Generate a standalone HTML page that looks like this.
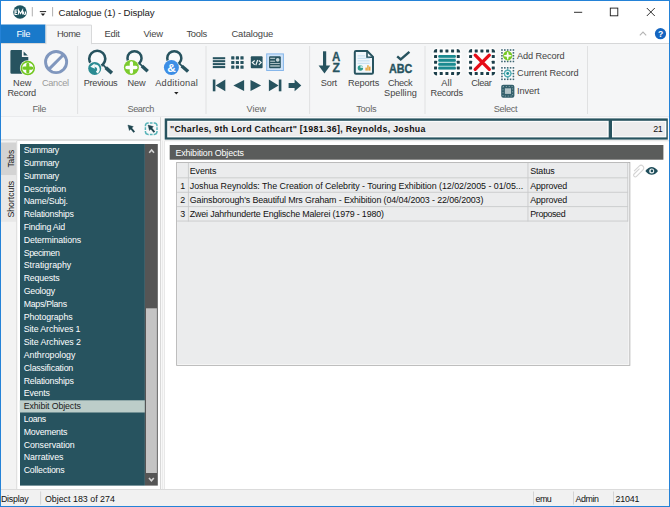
<!DOCTYPE html>
<html><head><meta charset="utf-8"><title>Catalogue (1) - Display</title>
<style>
html,body{margin:0;padding:0;}
body{width:670px;height:507px;overflow:hidden;position:relative;background:#ffffff;font-family:"Liberation Sans",sans-serif;}
.b{position:absolute;box-sizing:border-box;}
.t{position:absolute;white-space:nowrap;line-height:12.0px;height:12.0px;}
svg.ov{position:absolute;left:0;top:0;}
.vt{position:absolute;white-space:nowrap;line-height:12px;font-size:8.6px;color:#222;transform-origin:0 0;transform:rotate(-90deg);}
</style></head><body>

<svg class="ov" width="670" height="507" viewBox="0 0 670 507" font-family="Liberation Sans, sans-serif">
<!-- ===== tab row / ribbon ===== -->
<rect x="1" y="43" width="668" height="74" fill="#f5f6f7"/>
<rect x="1" y="43" width="668" height="1" fill="#d6d7d8"/>
<rect x="1" y="116.3" width="668" height="0.9" fill="#e6e7e8"/>
<rect x="1" y="24.5" width="44.5" height="18.5" fill="#1979ca"/>
<path d="M46 44.2 V25.1 H91.5 V44.2" fill="#f5f6f7" stroke="#d8d9da" stroke-width="1"/>
<!-- group separators -->
<g stroke="#e0e1e2" stroke-width="1">
<line x1="77.6" y1="46" x2="77.6" y2="114"/><line x1="206" y1="46" x2="206" y2="114"/><line x1="309.6" y1="46" x2="309.6" y2="114"/>
<line x1="425" y1="46" x2="425" y2="114"/><line x1="587.5" y1="46" x2="587.5" y2="114"/>
</g>
<!-- ===== title bar ===== -->
<circle cx="20" cy="12" r="6.8" fill="#1f5560"/>
<path d="M17.5 9.9 H15 V14.4 H17.5 M15 12.1 H17 M18.5 14.6 V10 L20.55 13.6 L22.6 10 V14.6 M23.7 11.4 V13.6 a.9 .9 0 0 0 1.8 0 V11.4 M25.5 11.4 V14.6" fill="none" stroke="#fff" stroke-width="1.05" stroke-linejoin="miter"/>
<g stroke="#a6a6a6" stroke-width="0.9"><line x1="32.3" y1="7.1" x2="32.3" y2="16.4"/><line x1="52.6" y1="7.1" x2="52.6" y2="16.4"/></g>
<rect x="39.8" y="11.1" width="6.3" height="1" fill="#222"/>
<path d="M40.7 13.6 H45.2 L42.95 15.9z" fill="#222"/>
<g stroke="#1a1a1a" stroke-width="0.9" fill="none">
<line x1="574" y1="12.3" x2="582.2" y2="12.3"/>
<rect x="610.3" y="8.1" width="7.5" height="7.7"/>
<path d="M646.8 8 L654.8 16 M654.8 8 L646.8 16"/>
</g>
<polyline points="639.8,35.3 643,32.1 646.2,35.3" fill="none" stroke="#b4b4b4" stroke-width="1.1"/>
<circle cx="660.5" cy="33.7" r="5.6" fill="#1565c0"/>
<text x="660.5" y="36.8" font-weight="700" font-size="8.6" fill="#fff" text-anchor="middle">?</text>

<!-- ===== File group ===== -->
<path d="M11.6 50.1 H21.9 V57 H28.3 V72.6 a1.2 1.2 0 0 1 -1.2 1.2 H11.6 a1.2 1.2 0 0 1 -1.2 -1.2 V51.3 a1.2 1.2 0 0 1 1.2 -1.2z" fill="#27535f"/>
<path d="M23.6 51.4 L27.8 55.6 H23.6z" fill="#27535f"/>
<circle cx="27.8" cy="68.1" r="7.9" fill="#f7f8f9"/>
<circle cx="27.8" cy="68.1" r="6.45" fill="#fdfefd" stroke="#73c823" stroke-width="1.6"/>
<path d="M23.9 68.1 H31.7 M27.8 64.2 V72" stroke="#73c823" stroke-width="3.1" stroke-linecap="round" fill="none"/>
<circle cx="56.1" cy="62.1" r="10.55" fill="#f8f9fa" stroke="#8097be" stroke-width="2.9"/>
<line x1="48.8" y1="69.4" x2="63.4" y2="54.8" stroke="#8097be" stroke-width="3"/>

<!-- ===== Search group ===== -->
<g fill="#f9fafb" stroke="#27535f">
<circle cx="97.25" cy="58.85" r="8.05" stroke-width="2.6"/>
<circle cx="134.5" cy="58.2" r="7.05" stroke-width="2.5"/>
<circle cx="174.3" cy="58.2" r="7.05" stroke-width="2.5"/>
</g>
<g stroke="#27535f" fill="none">
<line x1="103.3" y1="65" x2="106.4" y2="68.3" stroke-width="1.8"/><line x1="105.7" y1="67.6" x2="111.9" y2="73.2" stroke-width="3.6"/>
<line x1="139.8" y1="63.6" x2="142.5" y2="66.5" stroke-width="1.8"/><line x1="141.9" y1="65.9" x2="147.7" y2="71.3" stroke-width="3.4"/>
<line x1="179.6" y1="63.6" x2="182.3" y2="66.5" stroke-width="1.8"/><line x1="181.7" y1="65.9" x2="188.1" y2="71.6" stroke-width="3.4"/>
</g>
<circle cx="94.7" cy="68.4" r="7.3" fill="#f7f8f9"/>
<circle cx="94.7" cy="68.4" r="6.5" fill="#2a8b92"/>
<path d="M96.6 72.5 A3.6 3.6 0 0 0 94.3 65.8" fill="none" stroke="#f4fafa" stroke-width="2.5"/>
<path d="M90.3 66.7 L94.5 63.4 L94.9 68.7z" fill="#f4fafa"/>
<circle cx="131.4" cy="67.5" r="8.1" fill="#f7f8f9"/>
<circle cx="131.4" cy="67.5" r="7.5" fill="#7ccb2d"/>
<path d="M126.9 67.5 H135.9 M131.4 63 V72" stroke="#fdfefc" stroke-width="3.3" stroke-linecap="round" fill="none"/>
<circle cx="171.4" cy="67.5" r="8.1" fill="#f7f8f9"/>
<circle cx="171.4" cy="67.5" r="7.5" fill="#3d8ee6"/>
<text x="171.6" y="71.7" font-weight="700" font-size="11.8" fill="#fff" text-anchor="middle">&amp;</text>
<path d="M174.1 91.9 H178.5 L176.3 94.5z" fill="#222"/>

<!-- ===== View group ===== -->
<g fill="#27535f">
<rect x="212.8" y="57.2" width="12.4" height="2.05"/><rect x="212.8" y="60.15" width="12.4" height="2.05"/><rect x="212.8" y="63.1" width="12.4" height="2.05"/><rect x="212.8" y="66.05" width="12.4" height="2.05"/>
<g>
<rect x="231.2" y="56.3" width="3.2" height="3.2" rx=".5"/><rect x="235.8" y="56.3" width="3.2" height="3.2" rx=".5"/><rect x="240.4" y="56.3" width="3.2" height="3.2" rx=".5"/>
<rect x="231.2" y="60.9" width="3.2" height="3.2" rx=".5"/><rect x="235.8" y="60.9" width="3.2" height="3.2" rx=".5"/><rect x="240.4" y="60.9" width="3.2" height="3.2" rx=".5"/>
<rect x="231.2" y="65.5" width="3.2" height="3.2" rx=".5"/><rect x="235.8" y="65.5" width="3.2" height="3.2" rx=".5"/><rect x="240.4" y="65.5" width="3.2" height="3.2" rx=".5"/>
</g>
<rect x="250.8" y="56.3" width="11.8" height="11.9" rx=".9"/>
</g>
<g fill="none" stroke="#f2f6f6" stroke-width="1.15"><polyline points="254.7,60.5 252.3,62.6 254.7,64.7"/><line x1="257.7" y1="60" x2="255.8" y2="65.2"/><polyline points="258.8,60.5 261.2,62.6 258.8,64.7"/></g>
<rect x="266.7" y="53.9" width="16.7" height="16.6" fill="#cfe3f8" stroke="#86b6ea" stroke-width="1"/>
<rect x="269.1" y="56.3" width="11.7" height="11.9" rx=".9" fill="#27535f"/>
<g fill="#c9d7da">
<rect x="270.2" y="57.8" width="4.9" height="1"/><rect x="270.2" y="60.7" width="4.9" height="1"/>
<circle cx="277.7" cy="59.9" r="1.8"/>
<rect x="270.2" y="63" width="9.6" height=".8"/>
</g>
<rect x="270.2" y="65" width="9.6" height="1.9" fill="#8fa8ad"/>
<g fill="#27535f">
<rect x="212.8" y="79.5" width="2.6" height="11.8"/><path d="M225.3 79.5 V91.3 L215.6 85.4z"/>
<path d="M244.1 80 V91 L233.4 85.5z"/>
<path d="M250.5 80 V91 L261.1 85.5z"/>
<path d="M268.9 79.5 V91.3 L278.6 85.4z"/><rect x="278.8" y="79.5" width="2.6" height="11.8"/>
<path d="M288.6 83 H294.6 V79.6 L301.3 85.45 L294.6 91.3 V87.9 H288.6z"/>
</g>

<!-- ===== Tools group ===== -->
<g fill="#27535f">
<rect x="323" y="51.3" width="3.2" height="14.8"/><path d="M318.6 65.5 H330.3 L324.45 73.4z"/>
</g>
<text x="332" y="60.5" font-weight="700" font-size="13.5" fill="#27535f" stroke="#27535f" stroke-width=".3" textLength="8.3" lengthAdjust="spacingAndGlyphs">A</text>
<text x="332.6" y="71.9" font-weight="700" font-size="13.5" fill="#27535f" stroke="#27535f" stroke-width=".3" textLength="7.4" lengthAdjust="spacingAndGlyphs">Z</text>
<path d="M356 51.1 H367.2 L373 56.9 V72.6 a1.2 1.2 0 0 1 -1.2 1.2 H356 a1.2 1.2 0 0 1 -1.2 -1.2 V52.3 a1.2 1.2 0 0 1 1.2 -1.2z" fill="#f2f7fc" stroke="#27535f" stroke-width="2"/>
<path d="M367 51.4 V57.2 H372.8" fill="none" stroke="#27535f" stroke-width="1.6"/>
<g fill="#c4def0"><rect x="357.6" y="55.3" width="7.6" height="1.1"/><rect x="357.6" y="57.8" width="12" height="1.1"/><rect x="357.6" y="60.3" width="12" height="1.1"/><rect x="357.6" y="62.8" width="12" height="1.1"/></g>
<circle cx="360.4" cy="68" r="2.7" fill="#2f9c8f"/>
<path d="M360.4 68 V65.3 A2.7 2.7 0 0 1 363.1 68z" fill="#bfe3dd"/>
<g fill="#e9a63c"><rect x="365.4" y="67.6" width="1.5" height="3"/><rect x="367.2" y="65.2" width="1.5" height="5.4"/><rect x="369" y="66.6" width="1.5" height="4"/></g>
<polyline points="397.2,56.4 400.7,59.5 409.4,51.8" fill="none" stroke="#27535f" stroke-width="2.4"/>
<text x="388.9" y="73.4" font-weight="700" font-size="12" fill="#27535f" stroke="#27535f" stroke-width=".35" textLength="23.4" lengthAdjust="spacingAndGlyphs">ABC</text>

<!-- ===== Select group ===== -->
<g fill="#1c3f4a">
<rect x="432.35" y="47.70" width="29.12" height="29.12" rx="4.5" fill="#fdfdfd"/>
<path d="M437.05 52.40 L433.65 52.40 A3.4 3.4 0 0 1 437.05 49.00z"/>
<rect x="434.05" y="55.08" width="3" height="3" rx=".4"/>
<rect x="434.05" y="60.76" width="3" height="3" rx=".4"/>
<rect x="434.05" y="66.44" width="3" height="3" rx=".4"/>
<path d="M437.05 72.12 L433.65 72.12 A3.4 3.4 0 0 0 437.05 75.52z"/>
<rect x="439.73" y="49.40" width="3" height="3" rx=".4"/>
<rect x="439.73" y="72.12" width="3" height="3" rx=".4"/>
<rect x="445.41" y="49.40" width="3" height="3" rx=".4"/>
<rect x="445.41" y="72.12" width="3" height="3" rx=".4"/>
<rect x="451.09" y="49.40" width="3" height="3" rx=".4"/>
<rect x="451.09" y="72.12" width="3" height="3" rx=".4"/>
<path d="M456.77 52.40 L460.17 52.40 A3.4 3.4 0 0 0 456.77 49.00z"/>
<rect x="456.77" y="55.08" width="3" height="3" rx=".4"/>
<rect x="456.77" y="60.76" width="3" height="3" rx=".4"/>
<rect x="456.77" y="66.44" width="3" height="3" rx=".4"/>
<path d="M456.77 72.12 L460.17 72.12 A3.4 3.4 0 0 1 456.77 75.52z"/>
</g>
<g fill="#b4dadb"><rect x="438.6" y="55.2" width="17" height="14.2" rx="1"/></g>
<g fill="#1a8a90"><rect x="438.2" y="55" width="17.7" height="2.8" rx="1.2"/><rect x="438.2" y="58.95" width="17.7" height="2.8" rx="1.2"/><rect x="438.2" y="62.9" width="17.7" height="2.8" rx="1.2"/><rect x="438.2" y="66.8" width="17.7" height="2.8" rx="1.2"/></g>
<g fill="#1c3f4a">
<rect x="467.35" y="47.70" width="29.12" height="29.12" rx="4.5" fill="#fdfdfd"/>
<path d="M472.05 52.40 L468.65 52.40 A3.4 3.4 0 0 1 472.05 49.00z"/>
<rect x="469.05" y="55.08" width="3" height="3" rx=".4"/>
<rect x="469.05" y="60.76" width="3" height="3" rx=".4"/>
<rect x="469.05" y="66.44" width="3" height="3" rx=".4"/>
<path d="M472.05 72.12 L468.65 72.12 A3.4 3.4 0 0 0 472.05 75.52z"/>
<rect x="474.73" y="49.40" width="3" height="3" rx=".4"/>
<rect x="474.73" y="72.12" width="3" height="3" rx=".4"/>
<rect x="480.41" y="49.40" width="3" height="3" rx=".4"/>
<rect x="480.41" y="72.12" width="3" height="3" rx=".4"/>
<rect x="486.09" y="49.40" width="3" height="3" rx=".4"/>
<rect x="486.09" y="72.12" width="3" height="3" rx=".4"/>
<path d="M491.77 52.40 L495.17 52.40 A3.4 3.4 0 0 0 491.77 49.00z"/>
<rect x="491.77" y="55.08" width="3" height="3" rx=".4"/>
<rect x="491.77" y="60.76" width="3" height="3" rx=".4"/>
<rect x="491.77" y="66.44" width="3" height="3" rx=".4"/>
<path d="M491.77 72.12 L495.17 72.12 A3.4 3.4 0 0 1 491.77 75.52z"/>
</g>
<path d="M475.2 55.2 L489.3 69.3 M489.3 55.2 L475.2 69.3" stroke="#e60c17" stroke-width="3.3" stroke-linecap="round"/>
<!-- Add record -->
<rect x="500.35" y="48.40" width="14.68" height="14.68" fill="#fcfcfd"/>
<g fill="#3c6572">
<rect x="501.15" y="49.20" width="1.6" height="1.6"/>
<rect x="501.15" y="52.07" width="1.6" height="1.6"/>
<rect x="501.15" y="54.94" width="1.6" height="1.6"/>
<rect x="501.15" y="57.81" width="1.6" height="1.6"/>
<rect x="501.15" y="60.68" width="1.6" height="1.6"/>
<rect x="504.02" y="49.20" width="1.6" height="1.6"/>
<rect x="504.02" y="60.68" width="1.6" height="1.6"/>
<rect x="506.89" y="49.20" width="1.6" height="1.6"/>
<rect x="506.89" y="60.68" width="1.6" height="1.6"/>
<rect x="509.76" y="49.20" width="1.6" height="1.6"/>
<rect x="509.76" y="60.68" width="1.6" height="1.6"/>
<rect x="512.63" y="49.20" width="1.6" height="1.6"/>
<rect x="512.63" y="52.07" width="1.6" height="1.6"/>
<rect x="512.63" y="54.94" width="1.6" height="1.6"/>
<rect x="512.63" y="57.81" width="1.6" height="1.6"/>
<rect x="512.63" y="60.68" width="1.6" height="1.6"/>
</g>
<circle cx="507.7" cy="55.75" r="4.65" fill="#77c826"/>
<path d="M508.7 54.75 L511.5 55.3 L511.5 56.2 L508.7 56.75 L508.15 59.55 L507.25 59.55 L506.7 56.75 L503.9 56.2 L503.9 55.3 L506.7 54.75 L507.25 51.95 L508.15 51.95z" fill="#fbfdf9"/>
<!-- Current record -->
<rect x="500.35" y="66.25" width="14.68" height="14.68" fill="#fcfcfd"/>
<g fill="#3c6572">
<rect x="501.15" y="67.05" width="1.6" height="1.6"/>
<rect x="501.15" y="69.92" width="1.6" height="1.6"/>
<rect x="501.15" y="72.79" width="1.6" height="1.6"/>
<rect x="501.15" y="75.66" width="1.6" height="1.6"/>
<rect x="501.15" y="78.53" width="1.6" height="1.6"/>
<rect x="504.02" y="67.05" width="1.6" height="1.6"/>
<rect x="504.02" y="78.53" width="1.6" height="1.6"/>
<rect x="506.89" y="67.05" width="1.6" height="1.6"/>
<rect x="506.89" y="78.53" width="1.6" height="1.6"/>
<rect x="509.76" y="67.05" width="1.6" height="1.6"/>
<rect x="509.76" y="78.53" width="1.6" height="1.6"/>
<rect x="512.63" y="67.05" width="1.6" height="1.6"/>
<rect x="512.63" y="69.92" width="1.6" height="1.6"/>
<rect x="512.63" y="72.79" width="1.6" height="1.6"/>
<rect x="512.63" y="75.66" width="1.6" height="1.6"/>
<rect x="512.63" y="78.53" width="1.6" height="1.6"/>
</g>
<circle cx="507.7" cy="73.5" r="3.25" fill="#f4fafa" stroke="#55adb3" stroke-width="1.3"/>
<circle cx="507.7" cy="73.5" r="1.45" fill="#1f8f96"/>
<path d="M507.7 68.6 v1.4 M507.7 77 v1.4 M502.8 73.5 h1.4 M511.2 73.5 h1.4" stroke="#55adb3" stroke-width="1.2"/>
<!-- Invert -->
<rect x="500.6" y="84.2" width="14.4" height="14.2" rx="2.6" fill="#fbfbfc"/>
<rect x="501.2" y="84.8" width="13.2" height="13" rx="2" fill="#34606c"/>
<rect x="503" y="86.55" width="9.6" height="9.5" fill="none" stroke="#8eabb0" stroke-width="1" stroke-dasharray="1 1.87"/>
<rect x="504.9" y="88.3" width="6.1" height="5.6" fill="#b3c4c7"/>

<!-- ===== left pane ===== -->
<rect x="1" y="117.2" width="160" height="23" fill="#f7f8f9"/>
<rect x="1" y="139.6" width="160.4" height="0.9" fill="#bdbdbd"/>
<rect x="1" y="140.5" width="15.8" height="348.5" fill="#f3f3f3"/>
<rect x="1" y="142.5" width="15.3" height="32.9" fill="#d3d3d3"/>
<rect x="1" y="175.4" width="15.3" height="46.4" fill="#e8e8e8"/>
<rect x="16.4" y="141" width="0.8" height="348" fill="#d4d4d4"/>
<rect x="160.2" y="117.2" width="0.9" height="372" fill="#cfcfcf"/>
<rect x="161.1" y="117.2" width="3.1" height="372" fill="#f8f8f8"/>
<rect x="162" y="140.5" width="0.7" height="348.5" fill="#e6e6e6"/>
<rect x="164.2" y="140.5" width="0.7" height="348.5" fill="#dedede"/>
<rect x="20" y="144" width="124.9" height="341.6" fill="#27535f"/>
<rect x="19.8" y="400.3" width="125.1" height="12.2" fill="#bccdc9"/>
<rect x="144.9" y="144" width="12.9" height="341.6" fill="#555555"/>
<rect x="146" y="308.3" width="10.9" height="164.7" fill="#c4c4c4"/>
<polyline points="149.2,152.7 151.6,150 154,152.7" fill="none" stroke="#d4d4d4" stroke-width="1.6"/>
<polyline points="149,478 151.4,480.8 153.8,478" fill="none" stroke="#d4d4d4" stroke-width="1.6"/>
<text transform="translate(14.3 167.6) rotate(-90)" font-size="8.8" fill="#161616" textLength="17.8" lengthAdjust="spacingAndGlyphs">Tabs</text>
<text transform="translate(14.3 217.5) rotate(-90)" font-size="8.8" fill="#161616" textLength="36.7" lengthAdjust="spacingAndGlyphs">Shortcuts</text>
<!-- pane toolbar icons -->
<g fill="#1f4650" stroke="#1f4650">
<path d="M127.9 125.1 L133.3 126.6 L129.4 130.5z" stroke-width=".4"/><line x1="130.9" y1="128.1" x2="134.3" y2="132.1" stroke-width="1.9"/>
<path d="M148.0 125.1 L153.4 126.6 L149.5 130.5z" stroke-width=".4"/><line x1="151.0" y1="128.1" x2="154.4" y2="132.1" stroke-width="1.9"/>
</g>
<path d="M145.4 126.2 V125.7 A2.8 2.8 0 0 1 148.20000000000002 122.9 H148.70000000000002 M153.7 122.9 H154.2 A2.8 2.8 0 0 1 157.0 125.7 V126.2 M157.0 131.1 V131.6 A2.8 2.8 0 0 1 154.2 134.4 H153.7 M148.70000000000002 134.4 H148.20000000000002 A2.8 2.8 0 0 1 145.4 131.6 V131.1 M149.85 122.9 H152.54999999999998 M149.85 134.4 H152.54999999999998 M145.4 127.30000000000001 V130.0 M157.0 127.30000000000001 V130.0" fill="none" stroke="#58b4b9" stroke-width="1.45"/>

<!-- ===== right pane ===== -->
<rect x="165" y="140" width="504" height="1.3" fill="#e9e9e9"/>
<rect x="164.7" y="118.4" width="503.1" height="21.2" fill="#27535f"/>
<rect x="167.2" y="120.8" width="441.5" height="16.6" fill="#fbfbfb"/>
<rect x="168.5" y="122.1" width="438.6" height="14" fill="#ececed"/>
<rect x="612" y="120.8" width="54.4" height="16.6" fill="#fbfbfb"/>
<rect x="613.3" y="122.1" width="51.7" height="14" fill="#ececed"/>
<rect x="169.7" y="145" width="493.7" height="14.7" fill="#5a5c5b"/>
<!-- grid -->
<rect x="176.2" y="162" width="454.1" height="203.8" fill="#aeaeae"/>
<rect x="177.1" y="162.9" width="452.3" height="202" fill="#ffffff"/>
<rect x="177.1" y="162.9" width="451.5" height="201.2" fill="#ebeced"/>
<g fill="#c9cacb">
<rect x="177.1" y="177.4" width="451" height="0.9"/><rect x="177.1" y="191.8" width="451" height="0.9"/><rect x="177.1" y="206.2" width="451" height="0.9"/><rect x="177.1" y="220.6" width="451" height="0.9"/>
<rect x="187.9" y="162.9" width="0.9" height="58.6"/><rect x="527.5" y="162.9" width="0.9" height="58.6"/><rect x="627.3" y="162.9" width="0.9" height="58.6"/>
</g>
<!-- paperclip & eye -->
<g transform="translate(637.9 171.2) rotate(45) scale(.9)" fill="none" stroke="#d4d4d4" stroke-width="1.2">
<path d="M-3 3 V-5 a3 3 0 0 1 6 0 V5.2 a1.9 1.9 0 0 1 -3.8 0 V-3.4"/>
</g>
<path d="M645.4 170.9 Q651.7 163.2 658 170.9 Q651.7 178.6 645.4 170.9z" fill="#1f4e5b"/>
<circle cx="651.7" cy="170.9" r="2.5" fill="#f2f6f7"/>
<circle cx="651.9" cy="170.9" r="1.3" fill="#1f4e5b"/>

<!-- ===== status bar ===== -->
<rect x="1" y="489" width="668" height="17" fill="#f1f1f1"/>
<rect x="1" y="489" width="668" height="0.9" fill="#d9d9d9"/>
<g fill="#d0d0d0"><rect x="40.2" y="491.5" width=".9" height="13"/><rect x="533" y="491.5" width=".9" height="13"/><rect x="573.1" y="491.5" width=".9" height="13"/><rect x="613" y="491.5" width=".9" height="13"/></g>
</svg>

<span class="t" style="left:58.60px;top:7.04px;font-size:9.7px;color:#1a1a1a;letter-spacing:-0.143px;">Catalogue (1) - Display</span>
<span class="t" style="left:16.50px;top:28.44px;font-size:9.4px;color:#ffffff;letter-spacing:-0.402px;">File</span>
<span class="t" style="left:57.00px;top:28.44px;font-size:9.4px;color:#444444;letter-spacing:-0.404px;">Home</span>
<span class="t" style="left:104.40px;top:28.44px;font-size:9.4px;color:#444444;letter-spacing:-0.239px;">Edit</span>
<span class="t" style="left:143.40px;top:28.44px;font-size:9.4px;color:#444444;letter-spacing:-0.139px;">View</span>
<span class="t" style="left:186.40px;top:28.44px;font-size:9.4px;color:#444444;letter-spacing:-0.258px;">Tools</span>
<span class="t" style="left:231.40px;top:28.44px;font-size:9.4px;color:#444444;letter-spacing:-0.106px;">Catalogue</span>
<span class="t" style="left:13.00px;top:77.11px;font-size:9.2px;color:#444444;letter-spacing:0.003px;">New</span>
<span class="t" style="left:7.40px;top:87.31px;font-size:9.2px;color:#444444;letter-spacing:-0.171px;">Record</span>
<span class="t" style="left:41.90px;top:77.11px;font-size:9.2px;color:#9a9a9a;letter-spacing:-0.285px;">Cancel</span>
<span class="t" style="left:83.70px;top:77.11px;font-size:9.2px;color:#444444;letter-spacing:-0.256px;">Previous</span>
<span class="t" style="left:127.50px;top:77.11px;font-size:9.2px;color:#444444;letter-spacing:-0.130px;">New</span>
<span class="t" style="left:155.20px;top:77.11px;font-size:9.2px;color:#444444;letter-spacing:0.254px;">Additional</span>
<span class="t" style="left:320.70px;top:77.11px;font-size:9.2px;color:#444444;letter-spacing:-0.140px;">Sort</span>
<span class="t" style="left:348.10px;top:77.11px;font-size:9.2px;color:#444444;letter-spacing:-0.153px;">Reports</span>
<span class="t" style="left:388.00px;top:77.11px;font-size:9.2px;color:#444444;letter-spacing:-0.369px;">Check</span>
<span class="t" style="left:384.00px;top:87.31px;font-size:9.2px;color:#444444;letter-spacing:0.037px;">Spelling</span>
<span class="t" style="left:441.30px;top:77.11px;font-size:9.2px;color:#444444;letter-spacing:0.127px;">All</span>
<span class="t" style="left:430.60px;top:87.31px;font-size:9.2px;color:#444444;letter-spacing:-0.303px;">Records</span>
<span class="t" style="left:471.20px;top:77.11px;font-size:9.2px;color:#444444;letter-spacing:-0.314px;">Clear</span>
<span class="t" style="left:517.10px;top:49.61px;font-size:9.2px;color:#444444;letter-spacing:-0.123px;">Add Record</span>
<span class="t" style="left:517.10px;top:67.01px;font-size:9.2px;color:#444444;letter-spacing:-0.094px;">Current Record</span>
<span class="t" style="left:517.10px;top:84.81px;font-size:9.2px;color:#444444;letter-spacing:-0.097px;">Invert</span>
<span class="t" style="left:32.50px;top:103.41px;font-size:9.2px;color:#666666;letter-spacing:-0.278px;">File</span>
<span class="t" style="left:127.50px;top:103.41px;font-size:9.2px;color:#666666;letter-spacing:-0.438px;">Search</span>
<span class="t" style="left:246.50px;top:103.41px;font-size:9.2px;color:#666666;letter-spacing:-0.013px;">View</span>
<span class="t" style="left:356.20px;top:103.41px;font-size:9.2px;color:#666666;letter-spacing:-0.291px;">Tools</span>
<span class="t" style="left:493.80px;top:103.41px;font-size:9.2px;color:#666666;letter-spacing:-0.374px;">Select</span>
<span class="t" style="left:170.00px;top:122.85px;font-size:8.8px;color:#111;letter-spacing:0.297px;font-weight:700;">&quot;Charles, 9th Lord Cathcart&quot; [1981.36], Reynolds, Joshua</span>
<span class="t" style="left:653.20px;top:122.82px;font-size:8.9px;color:#111;letter-spacing:-0.287px;">21</span>
<span class="t" style="left:23.70px;top:144.25px;font-size:8.8px;color:#ffffff;letter-spacing:-0.363px;">Summary</span>
<span class="t" style="left:23.70px;top:157.05px;font-size:8.8px;color:#ffffff;letter-spacing:-0.363px;">Summary</span>
<span class="t" style="left:23.70px;top:169.85px;font-size:8.8px;color:#ffffff;letter-spacing:-0.363px;">Summary</span>
<span class="t" style="left:23.70px;top:182.65px;font-size:8.8px;color:#ffffff;letter-spacing:-0.147px;">Description</span>
<span class="t" style="left:23.70px;top:195.45px;font-size:8.8px;color:#ffffff;letter-spacing:-0.177px;">Name/Subj.</span>
<span class="t" style="left:23.70px;top:208.25px;font-size:8.8px;color:#ffffff;letter-spacing:-0.224px;">Relationships</span>
<span class="t" style="left:23.70px;top:221.05px;font-size:8.8px;color:#ffffff;letter-spacing:-0.212px;">Finding Aid</span>
<span class="t" style="left:23.70px;top:233.85px;font-size:8.8px;color:#ffffff;letter-spacing:-0.134px;">Determinations</span>
<span class="t" style="left:23.70px;top:246.65px;font-size:8.8px;color:#ffffff;letter-spacing:-0.416px;">Specimen</span>
<span class="t" style="left:23.70px;top:259.45px;font-size:8.8px;color:#ffffff;letter-spacing:0.014px;">Stratigraphy</span>
<span class="t" style="left:23.70px;top:272.25px;font-size:8.8px;color:#ffffff;letter-spacing:-0.171px;">Requests</span>
<span class="t" style="left:23.70px;top:285.05px;font-size:8.8px;color:#ffffff;letter-spacing:-0.238px;">Geology</span>
<span class="t" style="left:23.70px;top:297.85px;font-size:8.8px;color:#ffffff;letter-spacing:-0.287px;">Maps/Plans</span>
<span class="t" style="left:23.70px;top:310.65px;font-size:8.8px;color:#ffffff;letter-spacing:-0.099px;">Photographs</span>
<span class="t" style="left:23.70px;top:323.45px;font-size:8.8px;color:#ffffff;letter-spacing:-0.099px;">Site Archives 1</span>
<span class="t" style="left:23.70px;top:336.25px;font-size:8.8px;color:#ffffff;letter-spacing:-0.072px;">Site Archives 2</span>
<span class="t" style="left:23.70px;top:349.05px;font-size:8.8px;color:#ffffff;letter-spacing:-0.012px;">Anthropology</span>
<span class="t" style="left:23.70px;top:361.85px;font-size:8.8px;color:#ffffff;letter-spacing:-0.173px;">Classification</span>
<span class="t" style="left:23.70px;top:374.65px;font-size:8.8px;color:#ffffff;letter-spacing:-0.224px;">Relationships</span>
<span class="t" style="left:23.70px;top:387.45px;font-size:8.8px;color:#ffffff;letter-spacing:-0.134px;">Events</span>
<span class="t" style="left:23.70px;top:400.25px;font-size:8.8px;color:#1a1a1a;letter-spacing:-0.105px;">Exhibit Objects</span>
<span class="t" style="left:23.70px;top:413.05px;font-size:8.8px;color:#ffffff;letter-spacing:-0.394px;">Loans</span>
<span class="t" style="left:23.70px;top:425.85px;font-size:8.8px;color:#ffffff;letter-spacing:-0.219px;">Movements</span>
<span class="t" style="left:23.70px;top:438.65px;font-size:8.8px;color:#ffffff;letter-spacing:-0.070px;">Conservation</span>
<span class="t" style="left:23.70px;top:451.45px;font-size:8.8px;color:#ffffff;letter-spacing:-0.039px;">Narratives</span>
<span class="t" style="left:23.70px;top:464.25px;font-size:8.8px;color:#ffffff;letter-spacing:-0.203px;">Collections</span>
<span class="t" style="left:175.40px;top:146.82px;font-size:8.9px;color:#ffffff;letter-spacing:-0.141px;">Exhibition Objects</span>
<span class="t" style="left:189.80px;top:165.22px;font-size:8.9px;color:#111;letter-spacing:-0.123px;">Events</span>
<span class="t" style="left:530.30px;top:165.22px;font-size:8.9px;color:#111;letter-spacing:-0.162px;">Status</span>
<span class="t" style="left:180.20px;top:179.52px;font-size:8.9px;color:#111;">1</span>
<span class="t" style="left:189.80px;top:179.52px;font-size:8.9px;color:#111;letter-spacing:-0.039px;">Joshua Reynolds: The Creation of Celebrity - Touring Exhibition (12/02/2005 - 01/05...</span>
<span class="t" style="left:530.30px;top:179.52px;font-size:8.9px;color:#111;letter-spacing:-0.150px;">Approved</span>
<span class="t" style="left:180.20px;top:193.87px;font-size:8.9px;color:#111;">2</span>
<span class="t" style="left:189.80px;top:193.87px;font-size:8.9px;color:#111;letter-spacing:-0.117px;">Gainsborough&#x27;s Beautiful Mrs Graham - Exhibition (04/04/2003 - 22/06/2003)</span>
<span class="t" style="left:530.30px;top:193.87px;font-size:8.9px;color:#111;letter-spacing:-0.150px;">Approved</span>
<span class="t" style="left:180.20px;top:208.22px;font-size:8.9px;color:#111;">3</span>
<span class="t" style="left:189.80px;top:208.22px;font-size:8.9px;color:#111;letter-spacing:-0.159px;">Zwei Jahrhunderte Englische Malerei (1979 - 1980)</span>
<span class="t" style="left:530.30px;top:208.22px;font-size:8.9px;color:#111;letter-spacing:-0.388px;">Proposed</span>
<span class="t" style="left:0.90px;top:493.12px;font-size:8.9px;color:#111;letter-spacing:-0.216px;">Display</span>
<span class="t" style="left:44.90px;top:493.12px;font-size:8.9px;color:#111;letter-spacing:-0.005px;">Object 183 of 274</span>
<span class="t" style="left:535.50px;top:493.12px;font-size:8.9px;color:#111;letter-spacing:-0.489px;">emu</span>
<span class="t" style="left:575.60px;top:493.12px;font-size:8.9px;color:#111;letter-spacing:-0.451px;">Admin</span>
<span class="t" style="left:615.50px;top:493.12px;font-size:8.9px;color:#111;letter-spacing:-0.217px;">21041</span>
<div class="b" style="left:0;top:0;width:670px;height:507px;border:1px solid #2482d7;"></div>
</body></html>
